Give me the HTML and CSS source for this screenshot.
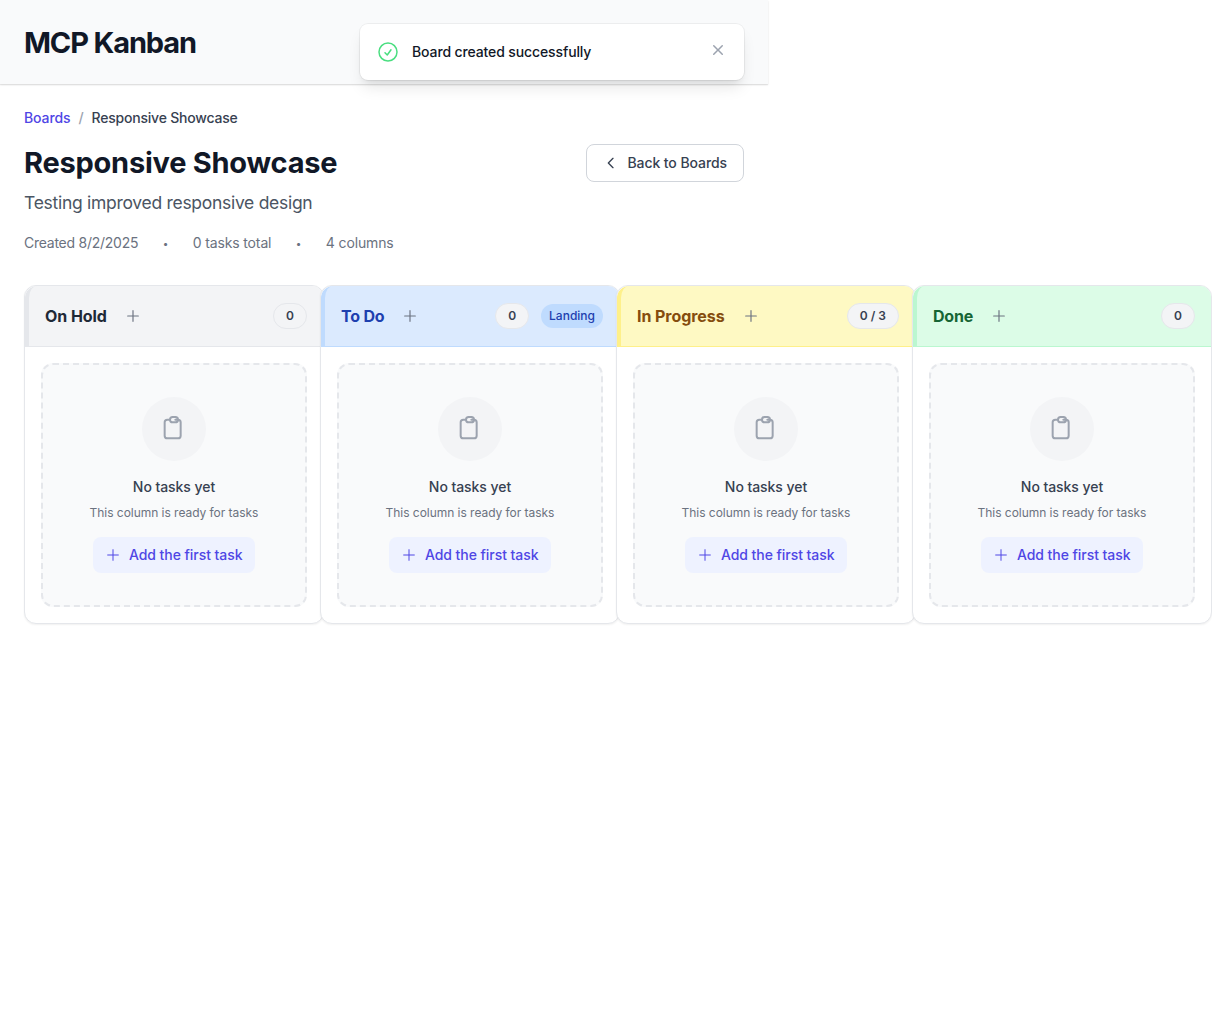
FILE: index.html
```html
<!DOCTYPE html>
<html lang="en">
<head>
<meta charset="utf-8">
<title>MCP Kanban</title>
<link rel="stylesheet" href="styles.css">
</head>
<body>
<svg class="sprite" aria-hidden="true">
  <symbol id="plus" viewBox="0 0 24 24"><path d="M12 4v16m8-8H4"/></symbol>
  <symbol id="clipboard" viewBox="0 0 24 24"><path d="M9 5H7a2 2 0 00-2 2v10a2 2 0 002 2h8a2 2 0 002-2V7a2 2 0 00-2-2h-2M9 5a2 2 0 002 2h2a2 2 0 002-2M9 5a2 2 0 012-2h2a2 2 0 012 2"/></symbol>
</svg>
<div class="page">
  <header class="app-header"><h1 class="brand">MCP Kanban</h1></header>
  <main class="content">
    <nav class="crumbs"><a class="crumb-link">Boards</a><span class="crumb-sep">/</span><span class="crumb-current">Responsive Showcase</span></nav>
    <div class="board-head">
      <div>
        <h2 class="board-title">Responsive Showcase</h2>
        <p class="board-desc">Testing improved responsive design</p>
      </div>
      <button class="back"><svg class="icon" viewBox="0 0 24 24"><path d="M15 19l-7-7 7-7"/></svg>Back to Boards</button>
    </div>
    <div class="meta"><span class="created">Created 8/2/2025</span><span class="dot">•</span><span>0 tasks total</span><span class="dot">•</span><span>4 columns</span></div>
    <div class="board">
      <section class="column hold">
        <div class="column-head"><h3 class="column-title">On Hold</h3><button class="add"><svg class="icon"><use href="#plus"/></svg></button><div class="badges"><span class="count">0</span></div></div>
        <div class="column-body"><div class="empty"><div class="empty-icon"><svg><use href="#clipboard"/></svg></div><p class="empty-title">No tasks yet</p><p class="empty-text">This column is ready for tasks</p><button class="first"><svg class="icon"><use href="#plus"/></svg>Add the first task</button></div></div>
      </section>
      <section class="column todo">
        <div class="column-head"><h3 class="column-title">To Do</h3><button class="add"><svg class="icon"><use href="#plus"/></svg></button><div class="badges"><span class="count">0</span><span class="landing">Landing</span></div></div>
        <div class="column-body"><div class="empty"><div class="empty-icon"><svg><use href="#clipboard"/></svg></div><p class="empty-title">No tasks yet</p><p class="empty-text">This column is ready for tasks</p><button class="first"><svg class="icon"><use href="#plus"/></svg>Add the first task</button></div></div>
      </section>
      <section class="column progress">
        <div class="column-head"><h3 class="column-title">In Progress</h3><button class="add"><svg class="icon"><use href="#plus"/></svg></button><div class="badges"><span class="count">0 / 3</span></div></div>
        <div class="column-body"><div class="empty"><div class="empty-icon"><svg><use href="#clipboard"/></svg></div><p class="empty-title">No tasks yet</p><p class="empty-text">This column is ready for tasks</p><button class="first"><svg class="icon"><use href="#plus"/></svg>Add the first task</button></div></div>
      </section>
      <section class="column done">
        <div class="column-head"><h3 class="column-title">Done</h3><button class="add"><svg class="icon"><use href="#plus"/></svg></button><div class="badges"><span class="count">0</span></div></div>
        <div class="column-body"><div class="empty"><div class="empty-icon"><svg><use href="#clipboard"/></svg></div><p class="empty-title">No tasks yet</p><p class="empty-text">This column is ready for tasks</p><button class="first"><svg class="icon"><use href="#plus"/></svg>Add the first task</button></div></div>
      </section>
    </div>
  </main>
  <div class="toast" role="status">
    <svg class="toast-icon" viewBox="0 0 24 24"><path d="M9 12.75L11.25 15 15 9.75M21 12a9 9 0 11-18 0 9 9 0 0118 0z"/></svg>
    <span class="toast-text">Board created successfully</span>
    <svg class="toast-close" viewBox="0 0 20 20"><path d="M6.28 5.22a.75.75 0 00-1.06 1.06L8.94 10l-3.72 3.72a.75.75 0 101.06 1.06L10 11.06l3.72 3.72a.75.75 0 101.06-1.06L11.06 10l3.72-3.72a.75.75 0 00-1.06-1.06L10 8.94 6.28 5.22z"/></svg>
  </div>
</div>
</body>
</html>
```
FILE: styles.css
```css
*, *::before, *::after { box-sizing: border-box; }
body, h1, h2, h3, p { margin: 0; }
body { background: #fff; color: #111827; font-family: Inter, "Liberation Sans", sans-serif; font-size: 14px; line-height: 20px; letter-spacing: -.06px; }
button { font: inherit; letter-spacing: inherit; border: 0; background: none; padding: 0; }
svg { fill: none; stroke: currentColor; stroke-width: 1.5; stroke-linecap: round; stroke-linejoin: round; flex: none; }
.sprite { display: none; }
.icon { display: block; width: 16px; height: 16px; }
.page { position: relative; width: 768px; }
.app-header { height: 84px; padding: 24px; background: #f9fafb; box-shadow: 0 1px 2px rgba(0,0,0,.1), 0 1px 1px rgba(0,0,0,.06); }
.brand { font-size: 29px; line-height: 37px; font-weight: 700; letter-spacing: -1.15px; }
.content { padding: 24px; }
.crumbs { display: flex; gap: 8px; font-weight: 500; letter-spacing: -.2px; }
.crumb-link { color: #4f46e5; letter-spacing: -.1px; }
.crumb-sep { color: #9ca3af; }
.crumb-current { color: #374151; }
.board-head { display: flex; justify-content: space-between; align-items: flex-start; padding-top: 16px; }
.board-title { font-size: 29px; line-height: 38px; font-weight: 700; letter-spacing: -.24px; }
.board-desc { margin-top: 7px; font-size: 17.5px; line-height: 28px; color: #4b5563; letter-spacing: -.29px; }
.back { display: flex; align-items: center; gap: 8px; height: 38px; padding: 0 16px; border: 1px solid #d1d5db; border-radius: 8px; color: #374151; font-weight: 500; letter-spacing: -.08px; background: #fff; }
.back .icon { stroke-width: 2; }
.meta { display: flex; gap: 24px; padding-top: 16px; color: #6b7280; letter-spacing: -.14px; }
.created { letter-spacing: -.25px; }
.dot { display: flex; justify-content: center; width: 6.5px; font-size: 10px; }
.board { display: flex; padding-top: 32px; }
.column { flex: none; width: 300px; margin-right: -4px; border: 1px solid #e5e7eb; border-radius: 12px; background: #fff; overflow: hidden; box-shadow: 0 1px 2px rgba(0,0,0,.06); }
.column-head { display: flex; align-items: center; gap: 12px; height: 61px; padding: 0 16px; border-left: 4px solid var(--edge); border-bottom: 1px solid var(--edge); border-top-left-radius: 12px; background: var(--tint); }
.column-title { font-size: 16px; line-height: 24px; font-weight: 700; letter-spacing: -.06px; color: var(--ink); }
.hold { --edge: #e5e7eb; --tint: #f3f4f6; --ink: #1f2937; }
.todo { --edge: #bfdbfe; --tint: #dbeafe; --ink: #1e40af; }
.todo .column-title { letter-spacing: -.2px; }
.progress { --edge: #fef08a; --tint: #fef9c3; --ink: #854d0e; }
.done { --edge: #bbf7d0; --tint: #dcfce7; --ink: #166534; }
.done .column-title { letter-spacing: -.2px; }
.add { padding: 6px; color: #6b7280; }
.add .icon { stroke-width: 1.75; }
.badges { display: flex; align-items: center; gap: 12px; margin-left: auto; font-size: 12px; line-height: 16px; letter-spacing: 0; }
.count { padding: 4px 12px; border: 1px solid #e5e7eb; border-radius: 13px; background: #f3f4f6; color: #374151; font-weight: 600; }
.landing { padding: 4px 8px; border-radius: 12px; background: #bfdbfe; color: #1e40af; font-weight: 500; }
.column-body { padding: 16px; }
.empty { display: flex; flex-direction: column; align-items: center; height: 244px; padding: 32px; border: 2px dashed #e5e7eb; border-radius: 12px; background: #f9fafb; }
.empty-icon { display: flex; align-items: center; justify-content: center; width: 64px; height: 64px; border-radius: 50%; background: #f3f4f6; color: #9ca3af; }
.empty-icon svg { width: 32px; height: 32px; }
.empty-title { margin-top: 16px; font-weight: 500; color: #374151; }
.empty-text { margin-top: 8px; font-size: 12px; line-height: 16px; letter-spacing: -.04px; color: #6b7280; }
.first { display: flex; align-items: center; gap: 8px; width: 162px; height: 36px; margin-top: 16px; padding: 0 12px; border-radius: 8px; background: #eef2ff; color: #4f46e5; font-weight: 500; white-space: nowrap; }
.toast { position: absolute; top: 24px; right: 24px; display: flex; align-items: center; width: 384px; height: 56px; padding: 0 16px; border-radius: 8px; background: #fff; box-shadow: 0 0 0 1px rgba(0,0,0,.05), 0 10px 15px -3px rgba(0,0,0,.1), 0 4px 6px -4px rgba(0,0,0,.1); }
.toast-icon { width: 24px; height: 24px; color: #4ade80; }
.toast-text { flex: 1; margin-left: 12px; font-weight: 500; letter-spacing: -.12px; }
.toast-close { width: 20px; height: 20px; margin-bottom: 4px; fill: #9ca3af; stroke: none; }
```
